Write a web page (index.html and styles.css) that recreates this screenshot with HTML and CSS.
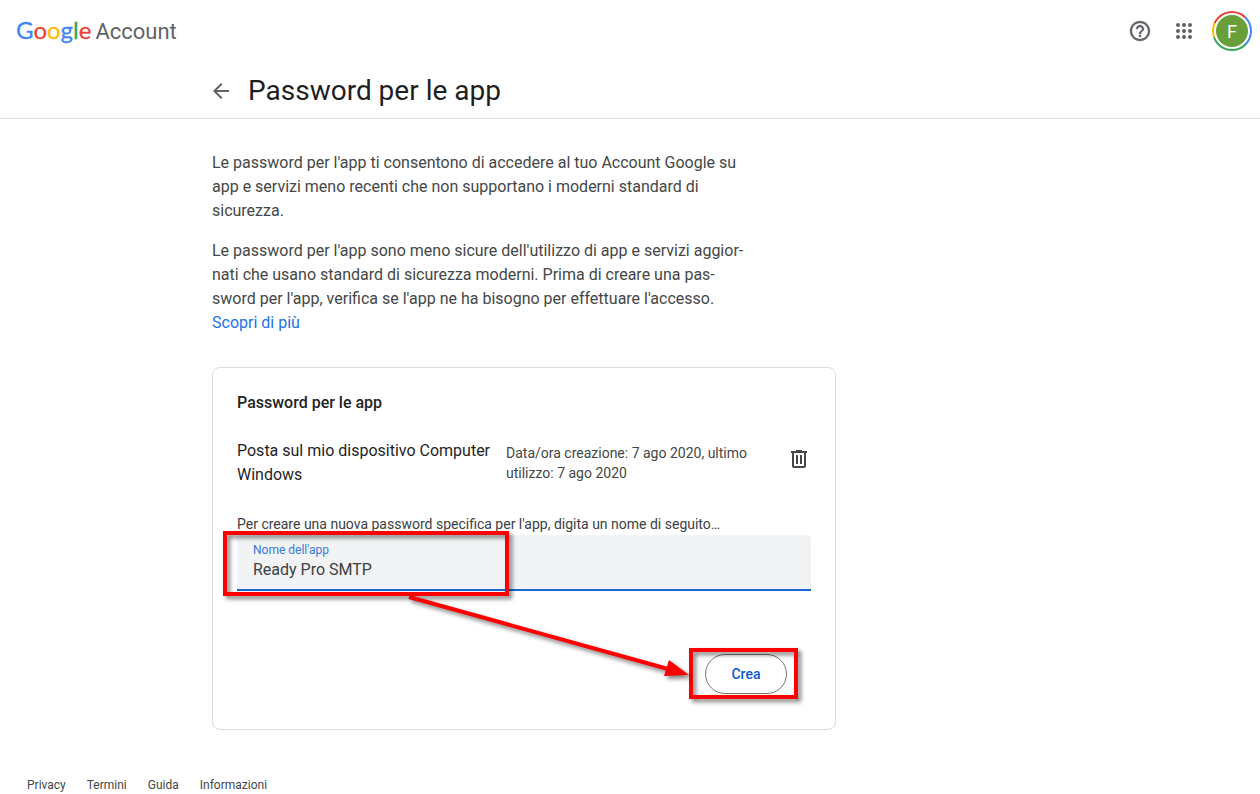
FILE: index.html
```html
<!DOCTYPE html>
<html lang="it">
<head>
    <meta charset="UTF-8">
    <meta name="viewport" content="width=device-width, initial-scale=1.0">
    <title>Password per le app</title>
    <link rel="stylesheet" href="styles.css">
</head>
<body>
    <header class="topbar">
        <a class="logo" href="#">
            <span class="logo-google"><span class="blue">G</span><span class="red">o</span><span class="yellow">o</span><span class="blue">g</span><span class="green">l</span><span class="red">e</span></span>
            <span class="logo-product">Account</span>
        </a>
        <div class="topbar-actions">
            <button class="icon-button" type="button" aria-label="Guida">
                <svg width="24" height="24" viewBox="0 0 24 24" fill="#5f6368" stroke="#5f6368" stroke-width=".3"><path d="M11 18h2v-2h-2v2zm1-16C6.480 2 2 6.480 2 12s4.480 10 10 10 10-4.480 10-10S17.520 2 12 2zm0 18c-4.410 0-8-3.590-8-8s3.590-8 8-8 8 3.590 8 8-3.590 8-8 8zm0-14c-2.210 0-4 1.790-4 4h2c0-1.100.9-2 2-2s2 .9 2 2c0 2-3 1.750-3 5h2c0-2.250 3-2.500 3-5 0-2.210-1.790-4-4-4z"/></svg>
            </button>
            <button class="icon-button" type="button" aria-label="App Google">
                <svg width="24" height="24" viewBox="0 0 24 24" fill="#5f6368">
                    <circle cx="6" cy="6" r="2"/><circle cx="12" cy="6" r="2"/><circle cx="18" cy="6" r="2"/>
                    <circle cx="6" cy="12" r="2"/><circle cx="12" cy="12" r="2"/><circle cx="18" cy="12" r="2"/>
                    <circle cx="6" cy="18" r="2"/><circle cx="12" cy="18" r="2"/><circle cx="18" cy="18" r="2"/>
                </svg>
            </button>
            <button class="avatar" type="button" aria-label="Account">
                <span class="avatar-letter">F</span>
            </button>
        </div>
    </header>

    <div class="title-bar">
        <div class="wrapper title-row">
            <a class="back" href="#" aria-label="Indietro">
                <svg width="20" height="20" viewBox="3 2 20 20" fill="#5f6368"><path d="M20 11H7.830l5.590-5.590L12 4l-8 8 8 8 1.410-1.410L7.830 13H20v-2z"/></svg>
            </a>
            <h1>Password per le app</h1>
        </div>
    </div>

    <main class="wrapper">
        <div class="intro">
            <p>Le password per l'app ti consentono di accedere al tuo Account Google su<br>
            app e servizi meno recenti che non supportano i moderni standard di<br>
            sicurezza.</p>
            <p>Le password per l'app sono meno sicure dell'utilizzo di app e servizi aggior-<br>
            nati che usano standard di sicurezza moderni. Prima di creare una pas-<br>
            sword per l'app, verifica se l'app ne ha bisogno per effettuare l'accesso.<br>
            <a class="link" href="#">Scopri di più</a></p>
        </div>

        <section class="card">
            <h2>Password per le app</h2>

            <div class="app-row">
                <div class="app-name">Posta sul mio dispositivo Computer Windows</div>
                <div class="app-date">Data/ora creazione: 7 ago 2020, ultimo utilizzo: 7 ago 2020</div>
                <button class="delete" type="button" aria-label="Elimina">
                    <svg width="24" height="24" viewBox="0 0 24 24" fill="#444746"><path d="M15 4V3H9v1H4v2h1v13c0 1.100.9 2 2 2h10c1.100 0 2-.9 2-2V6h1V4h-5zm2 15H7V6h10v13zM9 8h2v9H9zm4 0h2v9h-2z"/></svg>
                </button>
            </div>

            <form class="create-form">
                <p class="hint">Per creare una nuova password specifica per l'app, digita un nome di seguito…</p>
                <div class="field">
                    <label for="app-name">Nome dell'app</label>
                    <input type="text" id="app-name" value="Ready Pro SMTP">
                    <span class="highlight highlight-field"></span>
                </div>
                <div class="actions">
                    <div class="create-wrap">
                        <button class="create" type="button">Crea</button>
                        <span class="highlight highlight-create"></span>
                    </div>
                </div>
            </form>

            <!-- arrow from the name field to the button -->
            <svg class="arrow" width="290" height="90" viewBox="0 0 290 90">
                <path d="M5 4L264 76" stroke="#f00" stroke-width="4" fill="none"/>
                <path d="M265 67L285 82L260 83Z" fill="#f00"/>
            </svg>
        </section>
    </main>

    <footer class="footer">
        <a href="#">Privacy</a>
        <a href="#">Termini</a>
        <a href="#">Guida</a>
        <a href="#">Informazioni</a>
    </footer>
</body>
</html>
```
FILE: styles.css
```css
* {
    box-sizing: border-box;
}

body {
    margin: 0;
    background-color: #fff;
    color: #1f1f1f;
    font-family: Roboto, "Liberation Sans", sans-serif;
    font-size: 16px;
    line-height: 24px;
}

h1, h2, p {
    margin: 0;
    font-weight: 400;
}

a {
    color: inherit;
    text-decoration: none;
}

button {
    padding: 0;
    border: none;
    background: none;
    font-family: inherit;
    cursor: pointer;
}

svg {
    display: block;
}

.wrapper {
    max-width: 836px;
    margin: 0 auto;
}

/* top bar */
.topbar {
    display: flex;
    justify-content: space-between;
    align-items: center;
    height: 62px;
    padding: 0 8px 0 16px;
}

.logo {
    display: flex;
    align-items: baseline;
    gap: 4px;
    color: #5f6368;
    font-size: 22px;
}

.logo-google {
    font-family: Lato, sans-serif;
    font-size: 24px;
    -webkit-text-stroke: 0.3px;
}

.blue { color: #4285f4; }
.red { color: #ea4335; }
.yellow { color: #fbbc04; }
.green { color: #34a853; }

.topbar-actions {
    display: flex;
    align-items: center;
    gap: 4px;
}

.icon-button {
    display: flex;
    justify-content: center;
    align-items: center;
    width: 40px;
    height: 40px;
}

.avatar {
    width: 40px;
    height: 40px;
    margin-left: 4px;
    padding: 2px;
    border-radius: 50%;
    background: conic-gradient(from 45deg, #4285f4 0deg 90deg, #34a853 90deg 205deg, #fbbc04 205deg 250deg, #ea4335 250deg 360deg);
}

.avatar-letter {
    display: block;
    height: 36px;
    border: 2px solid #fff;
    border-radius: 50%;
    background-color: #689f38;
    color: #fff;
    font-size: 18px;
    line-height: 34px;
}

/* page title */
.title-bar {
    border-bottom: 1px solid #dadce0;
}

.title-row {
    display: flex;
    align-items: center;
    gap: 16px;
    height: 56px;
    padding-top: 2px;
}

h1 {
    font-size: 28px;
    line-height: 36px;
}

.intro {
    padding: 32px 0;
    color: #444746;
}

.intro p + p {
    margin-top: 16px;
}

.link {
    color: #1a73e8;
}

/* card */
.card {
    position: relative;
    max-width: 624px;
    padding: 23px 24px 35px;
    border: 1px solid #dadce0;
    border-radius: 8px;
}

h2 {
    font-size: 16px;
    font-weight: 500;
}

.app-row {
    display: grid;
    grid-template-columns: 1fr 266px 24px;
    gap: 15px;
    align-items: center;
    padding: 24px 0;
}

.app-date {
    color: #444746;
    font-size: 14px;
    line-height: 20px;
}

.delete {
    margin-bottom: 8px;
}

.hint {
    margin-top: 2px;
    color: #3c4043;
    font-size: 14px;
    line-height: 22px;
}

.field {
    position: relative;
    height: 56px;
    padding: 6px 16px;
    border-bottom: 2px solid #1967d2;
    border-radius: 4px 4px 0 0;
    background-color: #f1f3f4;
}

.field label {
    display: block;
    color: #3b78d8;
    font-size: 12px;
    line-height: 18px;
}

.field input {
    display: block;
    width: 100%;
    height: 20px;
    padding: 0;
    border: none;
    outline: none;
    background: none;
    color: #3c4043;
    font-family: inherit;
    font-size: 16px;
}

.actions {
    display: flex;
    justify-content: flex-end;
    padding: 63px 24px 0;
}

.create-wrap {
    position: relative;
}

.create {
    display: block;
    width: 82px;
    height: 40px;
    border: 1px solid #747775;
    border-radius: 20px;
    color: #0b57d0;
    font-size: 14px;
    font-weight: 500;
}

/* red callouts */
.highlight {
    position: absolute;
    border: 4px solid #f00;
    filter: drop-shadow(3px 3px 2px rgba(0, 0, 0, 0.5));
    pointer-events: none;
}

.highlight-field {
    top: -4px;
    left: -14px;
    width: 286px;
    height: 65px;
}

.highlight-create {
    top: -6px;
    left: -16px;
    width: 109px;
    height: 51px;
}

.arrow {
    position: absolute;
    top: 225px;
    left: 191px;
    filter: drop-shadow(3px 3px 2px rgba(0, 0, 0, 0.5));
    pointer-events: none;
}

.footer {
    display: flex;
    flex-wrap: wrap;
    gap: 21px;
    padding: 45px 27px 0;
    color: #444746;
    font-size: 12px;
    line-height: 20px;
}
```
